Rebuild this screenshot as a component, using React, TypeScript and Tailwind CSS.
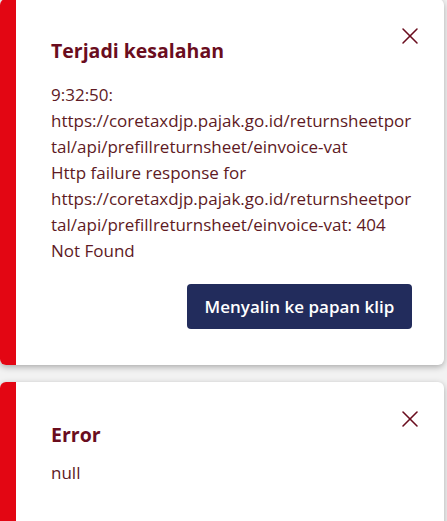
import { X } from 'lucide-react'

const errorUrl = 'https://coretaxdjp.pajak.go.id/returnsheetportal/api/prefillreturnsheet/einvoice-vat'

function Toast({ title, children, pt, pb }: { title: string; children: React.ReactNode; pt: string; pb: string }) {
  return (
    <div className="relative flex w-[444px] overflow-hidden rounded-[6px] bg-white shadow-[0_2px_6px_rgba(0,0,0,0.3)]">
      <div className="w-[16px] shrink-0 bg-[#e30613]" />
      <div className={`min-w-0 flex-1 pl-[35px] pr-[32px] ${pt} ${pb}`}>
        <h3 className="text-[19.5px] font-bold leading-[28px] text-[#6a0d1e]">{title}</h3>
        {children}
      </div>
      <button className="absolute right-[20px] top-[23px] text-[#6a0d1e]" aria-label="Tutup">
        <X size={28} strokeWidth={1.3} />
      </button>
    </div>
  )
}

export default function App() {
  return (
    <div className="min-h-[521px] overflow-hidden bg-[#f2f2f2] font-['Open_Sans',sans-serif]">
      <div className="flex flex-col gap-[17px]">
        <div className="-mt-[1px]">
          <Toast title="Terjadi kesalahan" pt="pt-[38px]" pb="pb-[36px]">
            <p className="mt-[17px] whitespace-pre-line break-words text-[17px] leading-[26px] text-[#5e1a24]">
              {`9:32:50: ${errorUrl}\nHttp failure response for ${errorUrl}: 404 Not Found`}
            </p>
            <div className="mt-[20px] flex justify-end">
              <button className="h-[45px] w-[225px] rounded-[4px] bg-[#222c5c] text-[17px] font-semibold text-white">
                Menyalin ke papan klip
              </button>
            </div>
          </Toast>
        </div>
        <Toast title="Error" pt="pt-[39px]" pb="pb-[60px]">
          <p className="mt-[11px] text-[17px] leading-[26px] text-[#5e1a24]">null</p>
        </Toast>
      </div>
    </div>
  )
}
